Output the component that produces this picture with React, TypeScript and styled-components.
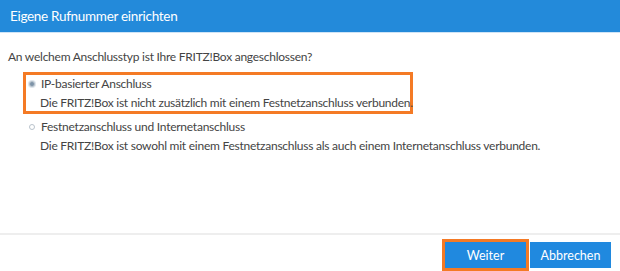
import styled, { createGlobalStyle } from 'styled-components';

const GlobalStyle = createGlobalStyle`
  html, body {
    margin: 0;
    padding: 0;
    background: #ffffff;
  }
  body {
    font-family: Lato, "Open Sans", sans-serif;
    color: #444444;
  }
`;

const Dialog = styled.div`
  width: 620px;
  height: 271px;
  display: flex;
  flex-direction: column;
  background: #ffffff;
  overflow: hidden;
`;

const Header = styled.div`
  height: 32px;
  flex-shrink: 0;
  background: #238ada;
  border-bottom: 1px solid #cfe4f6;
  display: flex;
  align-items: center;
  padding-left: 10px;
  color: #ffffff;
  font-size: 13.5px;
  letter-spacing: -0.3px;
`;

const Body = styled.div`
  flex: 1;
  padding: 16px 8px 0 8px;
`;

const Question = styled.div`
  font-size: 12px;
  letter-spacing: -0.25px;
  line-height: 16px;
  margin-bottom: 7px;
`;

const Option = styled.div<{ $marked?: boolean }>`
  margin-left: 15px;
  width: 390px;
  box-sizing: border-box;
  border: 3px solid ${(p) => (p.$marked ? '#f47a25' : 'transparent')};
  margin-bottom: 1px;
`;

const OptionLabel = styled.div`
  display: flex;
  align-items: center;
  gap: 6px;
  font-size: 12px;
  letter-spacing: -0.25px;
  line-height: 18px;
  padding-left: 3px;
`;

const Radio = styled.span<{ $checked?: boolean }>`
  width: 6px;
  height: 6px;
  border-radius: 50%;
  box-sizing: border-box;
  border: 1px solid #b9c3cc;
  background: ${(p) => (p.$checked ? '#7d93a8' : '#ffffff')};
  box-shadow: ${(p) => (p.$checked ? '0 0 0 1px #dde5ec' : 'none')};
  flex-shrink: 0;
`;

const OptionText = styled.div`
  font-size: 12px;
  letter-spacing: -0.25px;
  line-height: 16px;
  margin-top: 2px;
  padding-left: 14px;
  white-space: nowrap;
`;

const Footer = styled.div`
  height: 38px;
  box-sizing: border-box;
  flex-shrink: 0;
  border-top: 2px solid #eeeeee;
  display: flex;
  justify-content: flex-end;
  align-items: flex-start;
  gap: 1px;
  padding: 4px 9px 0 0;
`;

const Highlight = styled.div`
  border: 3px solid #f47a25;
  display: flex;
`;

const Button = styled.button<{ $offset?: boolean }>`
  height: 26px;
  min-width: 81px;
  padding: 0 10px;
  margin-top: ${(p) => (p.$offset ? '3px' : '0')};
  border: none;
  background: #2089df;
  color: #ffffff;
  font-family: Lato, "Open Sans", sans-serif;
  font-size: 12.5px;
  cursor: pointer;
`;

export default function App() {
  return (
    <>
      <GlobalStyle />
      <Dialog>
        <Header>Eigene Rufnummer einrichten</Header>
        <Body>
          <Question>An welchem Anschlusstyp ist Ihre FRITZ!Box angeschlossen?</Question>
          <Option $marked>
            <OptionLabel>
              <Radio $checked />
              IP-basierter Anschluss
            </OptionLabel>
            <OptionText>Die FRITZ!Box ist nicht zusätzlich mit einem Festnetzanschluss verbunden.</OptionText>
          </Option>
          <Option>
            <OptionLabel>
              <Radio />
              Festnetzanschluss und Internetanschluss
            </OptionLabel>
            <OptionText>
              Die FRITZ!Box ist sowohl mit einem Festnetzanschluss als auch einem Internetanschluss verbunden.
            </OptionText>
          </Option>
        </Body>
        <Footer>
          <Highlight>
            <Button>Weiter</Button>
          </Highlight>
          <Button $offset>Abbrechen</Button>
        </Footer>
      </Dialog>
    </>
  );
}
